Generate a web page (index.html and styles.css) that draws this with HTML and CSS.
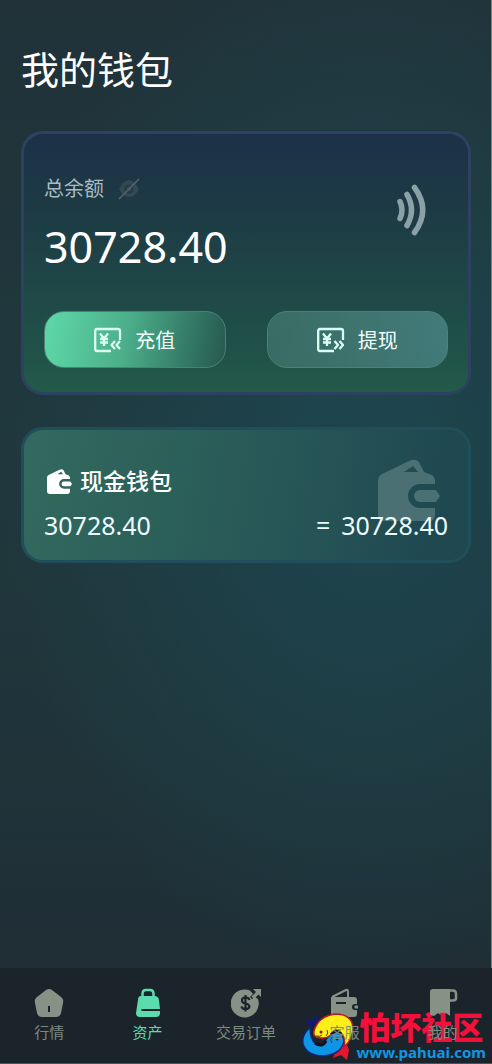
FILE: index.html
```html
<!DOCTYPE html>
<html lang="zh-CN">
<head>
<meta charset="utf-8">
<meta name="viewport" content="width=device-width, initial-scale=1">
<title>我的钱包</title>
<link rel="stylesheet" href="styles.css">
</head>
<body>
<svg class="defs" aria-hidden="true">
  <symbol id="wallet" viewBox="0 0 62 62">
    <path fill-rule="evenodd" d="M0 22Q0 17 4 15L31 2Q37-1 41 3L46 13L54 16Q57 18 57 21V25H42A12 12 0 0 0 42 49H57V56Q57 62 51 62H6Q0 62 0 56ZM26 13H40L35 7Z"/>
    <path d="M42 31H58L62 37L58 43H42A6 6 0 0 1 42 31Z"/>
  </symbol>
</svg>
<div class="page">
  <main class="main">
    <h1 class="title">我的钱包</h1>

    <section class="card balance">
      <div class="balance-head">
        <div>
          <div class="balance-label">
            <span>总余额</span>
            <button class="eye" type="button" aria-label="隐藏余额">
              <svg width="22" height="22" viewBox="0 0 22 22"><path d="M1 11Q5 3 11 2Q17 3 21 11Q17 19 11 19Q5 19 1 11Z" fill="#344851"/><circle cx="11" cy="11" r="3.500" fill="none" stroke="#223c46" stroke-width="2"/><path d="M1 21L21 1" stroke="#54666e" stroke-width="1.500"/></svg>
            </button>
          </div>
          <div class="amount">30728.40</div>
        </div>
        <svg class="waves" width="32" height="52" viewBox="0 0 32 52"><path d="M4 17.500Q8 26 4 34.500M11 10.500Q20 26 11 41.500M18.500 3.500Q35 26 18.500 48.500" fill="none" stroke="#8ba1a8" stroke-width="5.500" stroke-linecap="round"/></svg>
      </div>
      <div class="actions">
        <button class="action deposit" type="button">
          <svg width="28" height="26" viewBox="0 0 28 26"><path d="M17 24H3Q1.200 24 1.200 22V4Q1.200 2 3 2H24Q26 2 26 4V13M6 6.500L10 11.500L14 6.500M10 11.500V19M6 12H14M6 15.500H14M21 14L17.500 18L21 22M26 14L22.500 18L26 22"/></svg>
          <span>充值</span>
        </button>
        <button class="action withdraw" type="button">
          <svg width="28" height="26" viewBox="0 0 28 26"><path d="M17 24H3Q1.200 24 1.200 22V4Q1.200 2 3 2H24Q26 2 26 4V13M6 6.500L10 11.500L14 6.500M10 11.500V19M6 12H14M6 15.500H14M17.500 14L21 18L17.500 22M22.500 14L26 18L22.500 22"/></svg>
          <span>提现</span>
        </button>
      </div>
    </section>

    <section class="card cash">
      <svg class="cash-ghost"><use href="#wallet"/></svg>
      <h2 class="cash-title"><svg class="cash-icon"><use href="#wallet"/></svg>现金钱包</h2>
      <div class="cash-row"><span>30728.40</span><span class="cash-total"><span>=</span><span>30728.40</span></span></div>
    </section>
  </main>

  <nav class="tabs">
    <a class="tab" href="#market">
      <svg width="30" height="30" viewBox="0 0 30 30"><path fill-rule="evenodd" d="M12 2Q15 0 18 2L27 9Q30 11 29 15L27 25Q26 29 22 29H8Q4 29 3 25L1 15Q0 11 3 9ZM14 18V24H16V18Z"/></svg>
      <span>行情</span>
    </a>
    <a class="tab active" href="#assets" aria-current="page">
      <svg width="30" height="30" viewBox="0 0 30 30"><path d="M9.500 10V6Q9.500 2 13 2H17Q20.500 2 20.500 6V10" fill="none" stroke="currentColor" stroke-width="2.500"/><path d="M8 8H22Q25 8 26 12L27 21H10Q8 21 8 22T10 23H27V25Q27 29 23 29H7Q3 29 3 25L5 12Q5 8 8 8Z"/></svg>
      <span>资产</span>
    </a>
    <a class="tab" href="#orders">
      <svg width="30" height="30" viewBox="0 0 30 30"><path d="M19 2.500A14 14 0 1 0 27 11L24 9L21 11L19 9L22 6Z"/><path d="M22 1H30V9L27.500 6.500L23 11L20.500 8.500L25 4Z"/><path d="M18.500 12Q18 9.500 14.500 9.500T11 12.500Q11 15 14.500 15.500T18.500 18.500Q18 21 14.500 21T10.500 18.500M14.500 7V23.500" fill="none" stroke="#1b252b" stroke-width="2.200"/></svg>
      <span>交易订单</span>
    </a>
    <a class="tab" href="#service">
      <svg width="30" height="30" viewBox="0 0 30 30"><path d="M3 9L17 2Q19 1 19 4V9" fill="none" stroke="currentColor" stroke-width="2"/><path fill-rule="evenodd" d="M2 9H25Q28 9 28 12V16H26Q23 16 23 19T26 22H28V26Q28 29 25 29H5Q2 29 2 26ZM7 14V16H17V14Z"/><path d="M26 17.500H29V20.500H26Q24.500 19 26 17.500Z"/></svg>
      <span>客服</span>
    </a>
    <a class="tab" href="#mine">
      <svg width="30" height="30" viewBox="0 0 30 30"><path d="M5 1H22V28L18 25L14 28L10 25L6 28L2 27V4Q2 1 5 1Z"/><path d="M21 2.500H25Q28 2.500 28 6V10Q28 12.500 25 12.500H21" fill="none" stroke="currentColor" stroke-width="2.500"/></svg>
      <span>我的</span>
    </a>
  </nav>

  <div class="stamp">
    <svg class="stamp-logo" width="56" height="50" viewBox="2 5 56 50">
      <path d="M8 12L14 14L22 8L18 18L11 22Z" fill="#17186f"/>
      <path d="M39 42L48 36L51 44L49 54L43 49L35 52Z" fill="#e3172d"/>
      <path d="M12 21Q3 30 5 38Q9 50 25 50Q42 49 46 36Q46 28 38 27Q30 28 27 36Q24 41 18 38Q12 34 12 21Z" fill="#0d95e8" stroke="#15236d" stroke-width="1.500"/>
      <path d="M18 31Q14 29 17 22Q22 10 37 8Q55 8 55 23Q54 34 46 41Q48 33 44 28Q38 22 33 29Q27 34 18 31Z" fill="#ffef18" stroke="#b91927" stroke-width="1.500"/>
      <path d="M28 35Q24 42 17 37M43 28Q38 22 33 29" fill="none" stroke="#15131c" stroke-width="3"/>
      <circle cx="23" cy="26" r="1.500" fill="#8b1927"/><circle cx="39" cy="33" r="1.500" fill="#15236d"/>
      <path d="M18 30Q22 31 24 29M29 24Q31 27 28 30M34 31Q31 34 34 37" fill="none" stroke="#54303a"/>
    </svg>
    <div class="stamp-text"><strong>怕坏社区</strong><span>www.pahuai.com</span></div>
  </div>
</div>
</body>
</html>
```
FILE: styles.css
```css
* { box-sizing: border-box; }
body {
  margin: 0;
  color: #fff;
  font-family: "Noto Sans", "Noto Sans CJK SC", sans-serif;
}
button { font: inherit; color: inherit; border: 0; background: none; padding: 0; }
.defs { position: absolute; width: 0; height: 0; }
.page {
  position: relative;
  min-height: 100vh;
  display: flex;
  flex-direction: column;
  background:
    radial-gradient(ellipse 75% 50% at 75% 43%, #1d464f 0%, rgba(29, 70, 79, 0) 100%),
    linear-gradient(180deg, #213239 0%, #1f383d 40%, #1f343a 70%, #202d35 92%);
}
.main { flex: 1; padding: 41px 20px 32px 21px; border-right: 1px solid #718487; }
.title { margin: 0 0 34px; font-size: 38px; line-height: 56px; font-weight: 400; }
.card { position: relative; border: 3px solid; border-radius: 22px; }
.balance {
  padding: 40px 20px 24px;
  border-color: #2c4260;
  background: linear-gradient(180deg, #1c3148 0%, #1d3a44 28%, #1f4747 60%, #205048 80%, #235a49 100%);
}
.balance-head { display: flex; justify-content: space-between; align-items: flex-start; }
.balance-label { display: flex; align-items: center; gap: 14px; font-size: 20px; line-height: 30px; color: #a9bbc0; }
.eye { display: flex; }
.amount { margin-top: 15px; font-size: 43px; line-height: 56px; }
.waves { margin: 10px 20px 0 0; }
.actions { display: grid; grid-template-columns: 1fr 1fr; gap: 41px; margin-top: 36px; }
.action {
  display: flex;
  align-items: center;
  justify-content: center;
  gap: 13px;
  height: 57px;
  border: 1px solid #4b8178;
  border-radius: 20px;
  font-size: 20px;
  color: #f0fffb;
}
.action svg { fill: none; stroke: #d9fff4; stroke-width: 2.3; stroke-linejoin: round; }
.deposit { background: linear-gradient(100deg, #5cd4a6 5%, #4cae8a 45%, #2d6b5c 88%, #28594f 100%); }
.withdraw { background: linear-gradient(75deg, #386b63 0%, #3e736e 50%, #427b7b 100%); }
.cash {
  margin-top: 32px;
  padding: 36px 20px 19px;
  border-color: #204f5b;
  background: linear-gradient(100deg, #33695e 0%, #2b5f59 35%, #265456 65%, #1f4850 92%);
}
.cash-title { position: relative; display: flex; align-items: center; gap: 8px; margin: 0 0 14px; padding-left: 3px; font-size: 23px; line-height: 30px; font-weight: 500; }
.cash-icon { width: 25px; height: 25px; fill: #fff; }
.cash-ghost { position: absolute; right: 28px; top: 29px; width: 62px; height: 62px; fill: #4a7073; }
.cash-row { position: relative; display: flex; justify-content: space-between; padding-bottom: 1px; font-size: 25px; line-height: 30px; color: #edfcff; }
.cash-total { display: flex; gap: 11px; }
.tabs { display: flex; padding: 20px 0; background: #1b242b; border-bottom: 1px solid #48545b; }
.tab {
  flex: 1;
  display: flex;
  flex-direction: column;
  align-items: center;
  gap: 3px;
  color: #7d8a82;
  fill: #869286;
  font-size: 15px;
  line-height: 22px;
  text-decoration: none;
}
.tab svg { color: #869286; }
.tab span { position: relative; z-index: 2; }
.tab.active, .tab.active svg { color: #5cdbac; fill: #5cdbac; }
.stamp { position: absolute; z-index: 1; right: 6px; bottom: 3px; display: flex; align-items: center; pointer-events: none; }
.stamp-text { display: flex; flex-direction: column; align-items: center; }
.stamp-text strong { font-size: 31px; line-height: 32px; font-weight: 900; color: #f5103c; }
.stamp-text span { font-size: 15px; line-height: 18px; font-weight: 700; color: #1296e3; }
```
